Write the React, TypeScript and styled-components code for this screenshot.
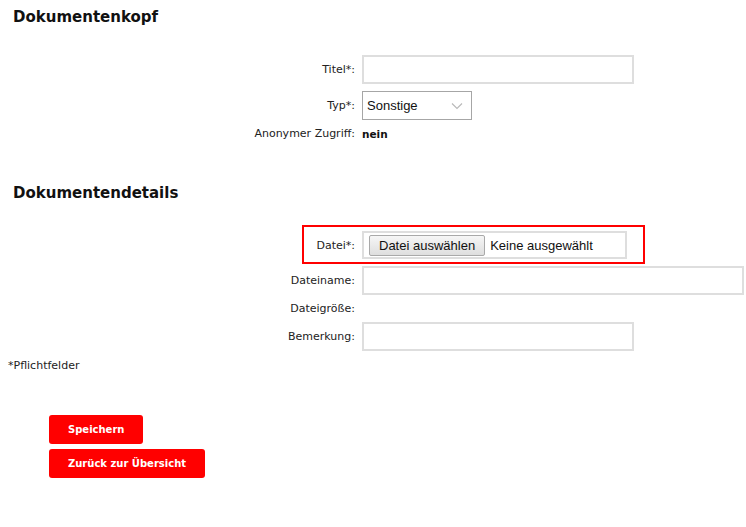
import React from "react";
import styled, { createGlobalStyle } from "styled-components";

const Global = createGlobalStyle`
  html, body { margin: 0; padding: 0; background: #fff; }
  body { font-family: "DejaVu Sans", Verdana, sans-serif; color: #222; }
`;

const Page = styled.div`
  width: 746px;
  padding: 7px 0 0 8px;
  box-sizing: border-box;
`;

const Heading = styled.h2`
  margin: 0 0 0 5px;
  font-size: 15px;
  line-height: 20px;
  font-weight: bold;
  color: #111;
`;

const Form = styled.div`
  display: flex;
  flex-direction: column;
  gap: 7px;
  margin-top: 28px;
`;

const Row = styled.div<{ $h?: number }>`
  position: relative;
  display: grid;
  grid-template-columns: 347px 1fr;
  column-gap: 7px;
  align-items: center;
  height: ${(p) => p.$h ?? 29}px;
`;

const Label = styled.div`
  text-align: right;
  font-size: 11px;
  line-height: 13px;
  color: #222;
  white-space: nowrap;
`;

const Value = styled.div`
  font-size: 10.5px;
  font-weight: bold;
  color: #111;
`;

const TextInput = styled.div<{ $w: number }>`
  width: ${(p) => p.$w}px;
  height: 29px;
  box-sizing: border-box;
  border: 2px solid #dedede;
  background: #fff;
`;

const Select = styled.div`
  width: 110px;
  height: 29px;
  box-sizing: border-box;
  border: 1px solid #a6a6a6;
  display: flex;
  align-items: center;
  justify-content: space-between;
  padding: 0 8px 0 4px;
  font-family: "Liberation Sans", Arial, sans-serif;
  font-size: 13px;
  color: #111;
`;

const FileBox = styled.div`
  width: 265px;
  height: 28px;
  box-sizing: border-box;
  border: 2px solid #dedede;
  display: flex;
  align-items: center;
  gap: 5px;
  padding-left: 5px;
  font-family: "Liberation Sans", Arial, sans-serif;
  font-size: 13px;
  color: #111;
`;

const FileButton = styled.div`
  height: 21px;
  box-sizing: border-box;
  padding: 0 9px;
  display: flex;
  align-items: center;
  border: 1px solid #a9a9a9;
  border-radius: 2px;
  background: linear-gradient(#f6f6f6, #dedede);
  color: #111;
`;

const Highlight = styled.div`
  position: absolute;
  left: 294px;
  top: -6px;
  width: 343px;
  height: 39px;
  box-sizing: border-box;
  border: 2px solid #ff0000;
  pointer-events: none;
`;

const Section2 = styled.div`
  margin-top: 43px;
`;

const Required = styled.div`
  margin-top: 8px;
  font-size: 11px;
  line-height: 13px;
  color: #222;
`;

const Buttons = styled.div`
  display: flex;
  flex-direction: column;
  align-items: flex-start;
  gap: 5px;
  margin: 43px 0 0 41px;
`;

const RedButton = styled.button`
  height: 29px;
  border: none;
  border-radius: 3px;
  background: #ff0000;
  color: #fff;
  font-family: "DejaVu Sans", Verdana, sans-serif;
  font-weight: bold;
  font-size: 10px;
  padding: 0 19px;
  cursor: pointer;
`;

const Chevron = () => (
  <svg width="12" height="8" viewBox="0 0 12 8">
    <path d="M1 1.5 L6 6.5 L11 1.5" fill="none" stroke="#b8b8b8" strokeWidth="1.1" />
  </svg>
);

export default function App() {
  return (
    <>
      <Global />
      <Page>
        <Heading>Dokumentenkopf</Heading>
        <Form>
          <Row>
            <Label>Titel*:</Label>
            <TextInput $w={272} />
          </Row>
          <Row>
            <Label>Typ*:</Label>
            <Select>
              <span>Sonstige</span>
              <Chevron />
            </Select>
          </Row>
          <Row $h={13}>
            <Label>Anonymer Zugriff:</Label>
            <Value>nein</Value>
          </Row>
        </Form>

        <Section2>
          <Heading>Dokumentendetails</Heading>
          <Form style={{ marginTop: 28 }}>
            <Row $h={28}>
              <Label>Datei*:</Label>
              <FileBox>
                <FileButton>Datei auswählen</FileButton>
                <span>Keine ausgewählt</span>
              </FileBox>
              <Highlight />
            </Row>
            <Row>
              <Label>Dateiname:</Label>
              <TextInput $w={382} />
            </Row>
            <Row $h={13}>
              <Label>Dateigröße:</Label>
              <span />
            </Row>
            <Row>
              <Label>Bemerkung:</Label>
              <TextInput $w={272} />
            </Row>
          </Form>
        </Section2>

        <Required>*Pflichtfelder</Required>

        <Buttons>
          <RedButton>Speichern</RedButton>
          <RedButton>Zurück zur Übersicht</RedButton>
        </Buttons>
      </Page>
    </>
  );
}
